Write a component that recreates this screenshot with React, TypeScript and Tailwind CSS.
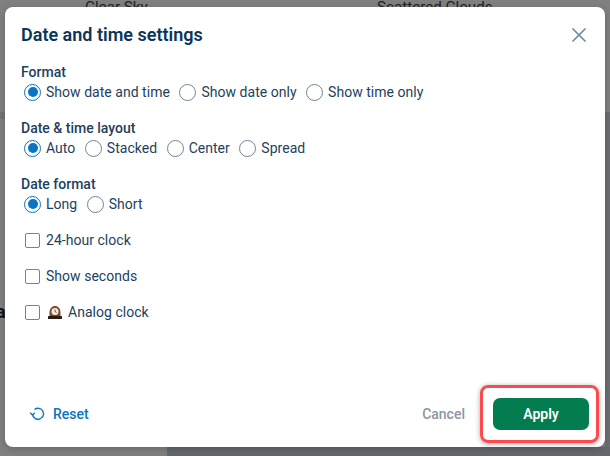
import { X } from "lucide-react";

function Radio({ label, checked = false }: { label: string; checked?: boolean }) {
  return (
    <label className="flex h-5 items-center gap-[5px]">
      <span
        className={`flex h-[17px] w-[17px] items-center justify-center rounded-full border-[1.5px] bg-white ${
          checked ? "border-[#0a75c2]" : "border-[#6f8499]"
        }`}
      >
        {checked && <span className="h-[10px] w-[10px] rounded-full bg-[#0a75c2]" />}
      </span>
      <span className="tracking-[0.03px]">{label}</span>
    </label>
  );
}

function RadioGroup({ title, options }: { title: string; options: string[] }) {
  return (
    <div>
      <p className="h-5 font-medium leading-5 text-[#1d3f60]">{title}</p>
      <div className="flex gap-[9.5px] pl-[3px]">
        {options.map((o, i) => (
          <Radio key={o} label={o} checked={i === 0} />
        ))}
      </div>
    </div>
  );
}

function Check({ children }: { children: React.ReactNode }) {
  return (
    <label className="flex h-5 items-center gap-[6px] pl-1">
      <span className="h-[15px] w-[15px] rounded-[2px] border-[1.5px] border-[#6f8499] bg-white" />
      {children}
    </label>
  );
}

function MantelClock() {
  return (
    <svg width="16" height="16" viewBox="0 0 16 16" className="ml-[1px]">
      <path d="M2.500 13V8.500C2.500 4.500 5 2 8 2s5.500 2.500 5.500 6.500V13z" fill="#7a4a32" />
      <circle cx="8" cy="7.500" r="3.500" fill="#f3ead8" />
      <path d="M8 5.500v2l1.500 1" stroke="#3a2a20" strokeWidth="0.8" fill="none" />
      <rect x="1" y="12" width="14" height="3" rx="0.5" fill="#2b1a12" />
    </svg>
  );
}

function ResetIcon() {
  return (
    <svg width="16" height="16" viewBox="0 0 16 16" fill="none" stroke="currentColor" strokeWidth="1.4">
      <path d="M5.500 3.500A5.500 5.500 0 1 1 3.500 8" />
      <path d="M1.200 6.800L3.500 9L5.800 6.800" />
    </svg>
  );
}

export default function App() {
  return (
    <div className="relative h-[456px] w-[610px] overflow-hidden bg-[#808080] font-['Roboto',sans-serif] text-sm text-[#1d3f60]">
      {/* page behind the overlay */}
      <div className="flex h-[7px] items-end overflow-hidden pl-[85px] text-[15.2px] leading-5 text-[#222]">
        <span className="relative top-[10px] w-[292px]">Clear Sky</span>
        <span className="relative top-[10px]">Scattered Clouds</span>
      </div>
      <div className="absolute bottom-0 right-0 top-[112px] w-[5px] bg-[#6b6e73]" />
      <div className="absolute bottom-0 left-[167px] right-0 h-[9px] bg-[#65696e]" />
      <div className="absolute left-0 top-[112px] h-[7px] w-[5px] bg-[#6f7479]" />
      <span className="absolute left-[-4px] top-[299px] text-[18px] font-bold text-[#111]">a</span>

      {/* dialog */}
      <div className="absolute left-[5px] top-[7px] flex h-[440px] w-[600px] flex-col rounded-lg bg-white shadow-[0_2px_8px_rgba(0,0,0,0.2)]">
        <div className="flex h-[55px] items-center justify-between pl-4 pr-[14px] pt-[1px]">
          <h2 className="text-[18px] font-semibold text-[#0b3558]">Date and time settings</h2>
          <button className="text-[#6f8aa3]">
            <X size={24} strokeWidth={1.75} />
          </button>
        </div>

        <div className="flex flex-1 flex-col pl-[16px]">
          <div className="flex flex-col gap-4">
            <RadioGroup
              title="Format"
              options={["Show date and time", "Show date only", "Show time only"]}
            />
            <RadioGroup title="Date & time layout" options={["Auto", "Stacked", "Center", "Spread"]} />
            <RadioGroup title="Date format" options={["Long", "Short"]} />
            <Check>
              <span className="tracking-[0.03px]">24-hour clock</span>
            </Check>
            <Check>
              <span className="tracking-[0.03px]">Show seconds</span>
            </Check>
            <Check>
              <span className="flex items-center gap-[5px] tracking-[0.03px]">
                <MantelClock />
                Analog clock
              </span>
            </Check>
          </div>
        </div>

        <div className="flex h-[66px] items-center justify-between pb-[1px] pl-[24px] pr-[16px]">
          <button className="flex items-center gap-[8px] font-medium text-[#0a75c2]">
            <ResetIcon />
            Reset
          </button>
          <div className="flex items-center gap-[28px]">
            <button className="font-medium text-[#8a97a5]">Cancel</button>
            <button className="h-8 w-[96px] rounded-[7px] bg-[#037c50] font-semibold text-white">
              Apply
            </button>
          </div>
        </div>
      </div>

      {/* annotation around Apply */}
      <div className="absolute left-[480px] top-[385px] h-[58px] w-[119px] rounded-lg border-[3px] border-[#fb4b4e] shadow-[0_1px_5px_rgba(0,0,0,0.35)]" />
    </div>
  );
}
